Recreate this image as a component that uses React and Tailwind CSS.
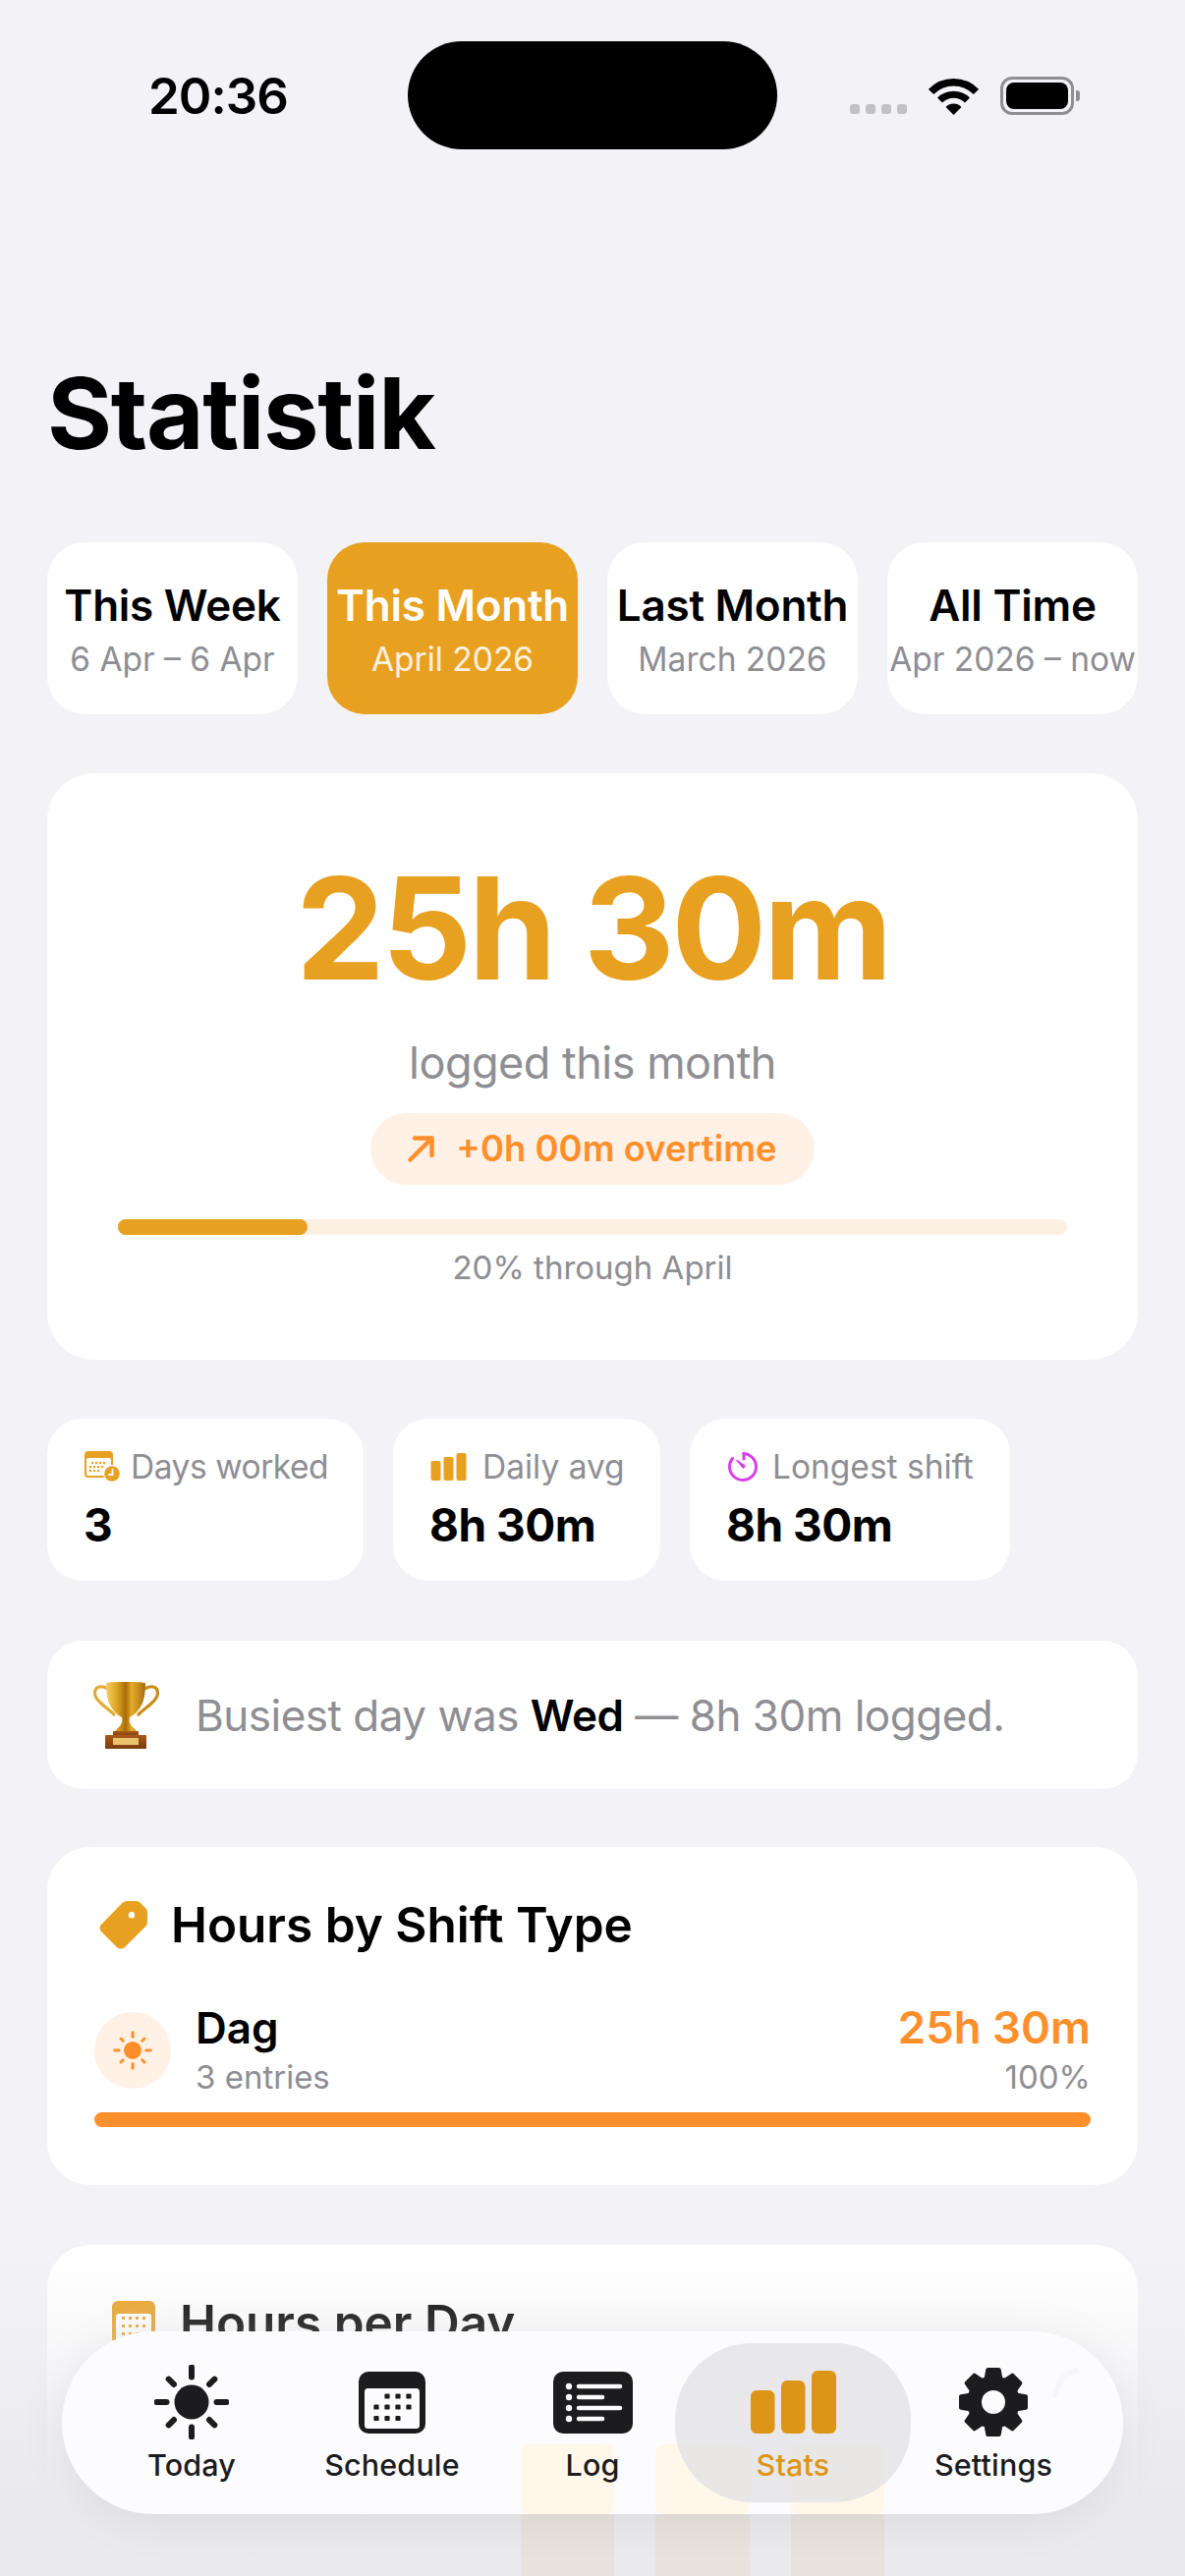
const AMBER = "#E8A020";

function Gear() {
  const pts = [];
  const cx = 36, cy = 36, R = 33.5, r = 25;
  for (let i = 0; i < 8; i++) {
    const a = (i * Math.PI) / 4 - Math.PI / 2;
    [[r, -0.3], [R, -0.17], [R, 0.17], [r, 0.3]].forEach(([rad, d]) => {
      pts.push(`${(cx + rad * Math.cos(a + d)).toFixed(2)},${(cy + rad * Math.sin(a + d)).toFixed(2)}`);
    });
  }
  return (
    <svg width="72" height="72" viewBox="0 0 72 72">
      <path
        fillRule="evenodd"
        fill="#1c1c1e"
        stroke="#1c1c1e"
        strokeWidth="4"
        strokeLinejoin="round"
        d={`M${pts.join(" L")} Z`}
      />
      <circle cx="36" cy="36" r="12" fill="#fcfcff" />
    </svg>
  );
}

function Sun({ size = 76, color = "#1c1c1e", disc = 17.5, inner = 25.5, outer = 35.5, sw = 6 }) {
  const c = 38;
  const rays = [];
  for (let i = 0; i < 8; i++) {
    const a = (i * Math.PI) / 4;
    const k = i % 2 ? 0.93 : 1;
    rays.push(
      <line
        key={i}
        x1={c + inner * Math.cos(a)}
        y1={c + inner * Math.sin(a)}
        x2={c + outer * k * Math.cos(a)}
        y2={c + outer * k * Math.sin(a)}
        stroke={color}
        strokeWidth={sw}
        strokeLinecap="round"
      />
    );
  }
  return (
    <svg width={size} height={size} viewBox="0 0 76 76">
      <circle cx={c} cy={c} r={disc} fill={color} />
      {rays}
    </svg>
  );
}

function CalendarIcon() {
  const dots = [
    [29, 25], [40, 25], [51, 25],
    [18, 36], [29, 36], [40, 36], [51, 36],
    [18, 47.5], [29, 47.5], [40, 47.5],
  ];
  return (
    <svg width="68" height="63" viewBox="0 0 68 63">
      <rect width="68" height="63" rx="10" fill="#1c1c1e" />
      <rect x="6" y="17" width="56" height="41" rx="3.5" fill="#fcfcff" />
      {dots.map(([x, y], i) => (
        <rect key={i} x={x - 2.6} y={y - 2.6} width="5.2" height="5.2" rx="1.2" fill="#1c1c1e" />
      ))}
    </svg>
  );
}

function LogIcon() {
  const rows = [[15, 68], [26, 50], [37, 68], [48, 50]];
  return (
    <svg width="81" height="63" viewBox="0 0 81 63">
      <rect width="81" height="63" rx="10" fill="#1c1c1e" />
      {rows.map(([y, end]) => (
        <g key={y}>
          <circle cx="16" cy={y} r="3.2" fill="#fcfcff" />
          <line x1="26" x2={end} y1={y} y2={y} stroke="#fcfcff" strokeWidth="4.5" strokeLinecap="round" />
        </g>
      ))}
    </svg>
  );
}

function StatsIcon() {
  return (
    <svg width="87" height="64" viewBox="0 0 87 64">
      <rect x="0" y="20" width="24.5" height="44" rx="6" fill="#DD9518" />
      <rect x="31" y="10" width="24.5" height="54" rx="6" fill="#DD9518" />
      <rect x="62" y="0" width="25" height="64" rx="6" fill="#DD9518" />
    </svg>
  );
}

function NavItem({ label, active, children }) {
  return (
    <div className="relative flex flex-col items-center">
      {active && <div className="absolute left-[-18px] right-[-18px] top-[-22px] h-[162px] rounded-[78px] bg-[#e2e2e5]/80" />}
      <div className="relative flex h-[76px] items-center justify-center">{children}</div>
      <div className={`relative mt-[7px] text-[30.5px] leading-[38px] font-medium tracking-[0.15px] ${active ? "text-[#DD9518]" : "text-[#1c1c1e]"}`}>
        {label}
      </div>
    </div>
  );
}

function Chip({ title, sub, active }) {
  return (
    <div className={`flex h-[175px] w-[255px] flex-col items-center justify-center rounded-[38px] whitespace-nowrap ${active ? "bg-[#E8A020] text-white" : "bg-white text-black"}`}>
      <div className="text-[44px] leading-[54px] font-semibold tracking-[-0.25px]">{title}</div>
      <div className={`mt-[8px] text-[33.5px] leading-[40px] ${active ? "text-white/85" : "text-[#8e8e93]"}`}>{sub}</div>
    </div>
  );
}

function StatCard({ icon, label, value, width, gap, tracking }) {
  return (
    <div className={`h-[165px] rounded-[36px] bg-white pl-[38px] pt-[29px] whitespace-nowrap ${width}`}>
      <div className={`flex h-[40px] items-center text-[33.5px] leading-[40px] text-[#8e8e93] ${gap}`}>
        {icon}
        <span className={tracking}>{label}</span>
      </div>
      <div className="mt-[16px] -ml-[1px] text-[46px] leading-none font-bold tracking-[-0.5px] text-black">{value}</div>
    </div>
  );
}

function Trophy() {
  return (
    <svg width="67" height="68" viewBox="0 0 67 68">
      <defs>
        <linearGradient id="tg" x1="0" x2="1" y1="0" y2="0">
          <stop offset="0" stopColor="#f6cf62" />
          <stop offset="0.3" stopColor="#d9a021" />
          <stop offset="0.5" stopColor="#a86c08" />
          <stop offset="0.65" stopColor="#e6ad2c" />
          <stop offset="1" stopColor="#a66d0c" />
        </linearGradient>
        <linearGradient id="tb" x1="0" x2="0" y1="0" y2="1">
          <stop offset="0" stopColor="#a85a18" />
          <stop offset="1" stopColor="#7c3a0c" />
        </linearGradient>
      </defs>
      <path d="M15 7 C6 2 0 6 2 14 C4 21 14 26 21 33" fill="none" stroke="#e2ab33" strokeWidth="3.2" strokeLinecap="round" />
      <path d="M52 7 C61 2 67 6 65 14 C63 21 53 26 46 33" fill="none" stroke="#c98f1a" strokeWidth="3.2" strokeLinecap="round" />
      <path d="M13 1 C20 -0.5 46 -0.5 53 1 C53 17 50 29 37 36 C36 40 37 43 40 46 C43 48 44 50 44 51 L22 51 C22 50 23 48 26 46 C29 43 30 40 29 36 C16 29 13 17 13 1 Z" fill="url(#tg)" />
      <rect x="20" y="50" width="26" height="6" fill="url(#tb)" />
      <rect x="12" y="54" width="42" height="14" rx="1" fill="url(#tb)" />
      <rect x="20" y="57" width="26" height="7" fill="#e9c36c" />
    </svg>
  );
}

export default function App() {
  return (
    <div className="relative h-[2622px] w-[1206px] overflow-hidden bg-[#f2f2f7] font-['Inter',sans-serif] text-black">
      {/* status bar */}
      <div className="flex h-[152px] items-start pt-[42px]">
        <div className="flex h-[110px] w-[415px] items-center pl-[151px] text-[51px] leading-none font-semibold tracking-[-1px]">20:36</div>
        <div className="h-[110px] w-[376px] rounded-[55px] bg-black" />
        <div className="flex h-[110px] items-start pl-[74px]">
          <div className="mt-[64px] flex gap-[6px]">
            <div className="h-[10px] w-[10px] rounded-[3px] bg-[#c2c2c6]" />
            <div className="h-[10px] w-[10px] rounded-[3px] bg-[#c2c2c6]" />
            <div className="h-[10px] w-[10px] rounded-[3px] bg-[#c2c2c6]" />
            <div className="h-[10px] w-[10px] rounded-[3px] bg-[#c2c2c6]" />
          </div>
          <svg className="mt-[37px] ml-[22px]" width="51" height="38" viewBox="0 0 51 38">
            <path d="M2.5 14.5 A32 32 0 0 1 48.5 14.5" fill="none" stroke="#000" strokeWidth="7.5" />
            <path d="M11.5 23 A20 20 0 0 1 39.5 23" fill="none" stroke="#000" strokeWidth="7" />
            <path d="M17.5 30 A11 11 0 0 1 33.5 30 L25.5 38 Z" fill="#000" />
          </svg>
          <div className="mt-[36px] ml-[22px] flex items-center">
            <div className="flex h-[39px] w-[75px] items-center justify-center rounded-[12px] border-[3.5px] border-[#8e8e93]">
              <div className="h-[27px] w-[63px] rounded-[8px] bg-black" />
            </div>
            <div className="ml-[2px] h-[11px] w-[4px] rounded-r-[3px] bg-[#8e8e93]" />
          </div>
        </div>
      </div>

      <div className="px-[48px]">
        <h1 className="mt-[218px] text-[101px] leading-none font-bold tracking-[-1.3px]">Statistik</h1>

        <div className="mt-[81px] flex gap-[30px]">
          <Chip title="This Week" sub="6 Apr – 6 Apr" />
          <Chip title="This Month" sub="April 2026" active />
          <Chip title="Last Month" sub="March 2026" />
          <Chip title="All Time" sub="Apr 2026 – now" />
        </div>

        {/* hero */}
        <div className="mt-[60px] flex h-[597px] flex-col items-center rounded-[48px] bg-white px-[72px] pt-[86px]">
          <div className="text-[144px] leading-none font-bold tracking-[-3.4px] text-[#E8A020]">25h 30m</div>
          <div className="mt-[37px] text-[45px] leading-[56px] tracking-[-0.5px] text-[#8e8e93]">logged this month</div>
          <div className="mt-[23px] flex h-[73px] items-center gap-[22px] rounded-[37px] bg-[#fff1e6] px-[38px]">
            <svg width="27" height="27" viewBox="0 0 27 27" fill="none" stroke="#FF8F2B" strokeWidth="4.5" strokeLinecap="round" strokeLinejoin="round">
              <path d="M2.5 24.5 L24.5 2.5 M7 2.5 H24.5 V20" />
            </svg>
            <span className="text-[36.5px] leading-none font-semibold text-[#FF8F2B]">+0h 00m overtime</span>
          </div>
          <div className="mt-[35px] h-[16px] w-full rounded-full bg-[#fcf1e0]">
            <div className="h-full w-[20%] rounded-full bg-[#E8A020]" />
          </div>
          <div className="mt-[13px] text-[33px] leading-[40px] text-[#8e8e93]">20% through April</div>
        </div>

        {/* stats */}
        <div className="mt-[60px] flex gap-[30px]">
          <StatCard
            width="w-[322px]"
            gap="gap-[11px]"
            tracking="tracking-[-0.45px]"
            label="Days worked"
            value="3"
            icon={
              <svg width="36" height="32" viewBox="0 0 36 32">
                <rect y="0" width="29" height="27" rx="4" fill={AMBER} />
                <rect x="2" y="7" width="25" height="18" rx="2" fill="#fff" />
                {[[7, 11], [11, 11], [15, 11], [19, 11], [5, 15], [9, 15], [13, 15], [17, 15], [5, 19], [9, 19], [13, 19]].map(([x, y], i) => (
                  <rect key={i} x={x} y={y} width="2.2" height="2.2" fill={AMBER} />
                ))}
                <circle cx="28" cy="23" r="9" fill="#fff" />
                <circle cx="28" cy="23" r="7.8" fill={AMBER} />
                <path d="M28.5 18 V24 H24" fill="none" stroke="#fff" strokeWidth="1.8" />
              </svg>
            }
          />
          <StatCard
            width="w-[272px]"
            gap="gap-[16px]"
            label="Daily avg"
            value="8h 30m"
            icon={
              <svg width="37" height="28" viewBox="0 0 36 28">
                <rect x="0" y="8" width="10" height="20" rx="2" fill={AMBER} />
                <rect x="13" y="4" width="10" height="24" rx="2" fill={AMBER} />
                <rect x="26" y="0" width="10" height="28" rx="2" fill={AMBER} />
              </svg>
            }
          />
          <StatCard
            width="w-[326px]"
            gap="gap-[14px]"
            label="Longest shift"
            value="8h 30m"
            icon={
              <svg width="32" height="32" viewBox="0 0 32 32" fill="none" stroke="#D63FE5" strokeWidth="3" strokeLinecap="round">
                <path d="M17 2.5 A13.5 13.5 0 1 1 5.5 7.5" />
                <path d="M17 2.5 V8" />
                <path d="M10 9.5 L16.5 17 L18 15 Z" fill="#D63FE5" strokeWidth="1.5" strokeLinejoin="round" />
              </svg>
            }
          />
        </div>

        {/* insight */}
        <div className="mt-[61px] flex h-[151px] items-center gap-[37px] rounded-[36px] bg-white pl-[47px]">
          <Trophy />
          <div className="text-[44px] leading-[56px] tracking-[-0.5px] whitespace-nowrap text-[#8e8e93]">
            Busiest day was <span className="font-semibold text-black">Wed</span> — 8h 30m logged.
          </div>
        </div>

        {/* shift type */}
        <div className="mt-[59px] h-[344px] rounded-[44px] bg-white px-[48px] pt-[49px]">
          <div className="flex h-[60px] items-center gap-[24px] pl-[5px]">
            <svg width="49" height="49" viewBox="0 0 49 49">
              <path
                fillRule="evenodd"
                fill={AMBER}
                d="M24 1.5 Q25.5 0 28 0 L38 0 Q40 0 41.5 1.5 L47.5 7.5 Q49 9 49 11 L49 21 Q49 24 47 26 L26 47 Q22 50 18 47 L2 31 Q-1 27 2 24 Z M33 11 A3.2 3.2 0 1 0 33 17.4 A3.2 3.2 0 1 0 33 11 Z"
              />
            </svg>
            <div className="text-[49.5px] leading-[60px] font-semibold">Hours by Shift Type</div>
          </div>
          <div className="mt-[51px] flex items-center">
            <div className="flex h-[78px] w-[78px] items-center justify-center rounded-full bg-[#fff1e6]">
              <Sun size={42} color="#FF8F2B" disc={16.3} inner={25} outer={33} sw={5.4} />
            </div>
            <div className="ml-[25px] flex-1">
              <div className="text-[44px] leading-[48px] font-semibold">Dag</div>
              <div className="mt-[6px] text-[33px] leading-[40px] text-[#8e8e93]">3 entries</div>
            </div>
            <div className="text-right">
              <div className="text-[45.5px] leading-[48px] font-semibold text-[#FF8F2B]">25h 30m</div>
              <div className="mt-[6px] text-[33px] leading-[40px] text-[#8e8e93]">100%</div>
            </div>
          </div>
          <div className="mt-[16px] h-[15px] rounded-full bg-[#FF8F2B]" />
        </div>

        {/* hours per day */}
        <div className="mt-[61px] h-[500px] rounded-[44px] bg-white pt-[49px] pr-[48px] pl-[66px]">
          <div className="flex h-[60px] items-center gap-[25px]">
            <svg width="44" height="44" viewBox="0 0 44 44">
              <rect width="44" height="44" rx="6" fill={AMBER} />
              <rect x="4" y="13" width="36" height="28" rx="3" fill="#fff" />
              {[16, 24, 32].map((y) =>
                [10, 17, 24, 31].map((x) => <rect key={`${x}-${y}`} x={x} y={y} width="3" height="3" fill={AMBER} />)
              )}
            </svg>
            <div className="text-[49.5px] leading-[60px] font-semibold">Hours per Day</div>
          </div>
          <div className="mt-[93px] flex items-start gap-[42px] pl-[416px]">
            <div className="h-[300px] w-[95px] rounded-t-[8px] bg-[#E8A020]" />
            <div className="h-[300px] w-[96px] rounded-t-[8px] bg-[#E8A020]" />
            <div className="h-[300px] w-[95px] rounded-t-[8px] bg-[#E8A020]" />
          </div>
        </div>
      </div>

      {/* fade at bottom */}
      <div className="absolute inset-x-0 top-[2290px] bottom-0 bg-linear-to-b from-[#e8e8ed]/0 via-[#e8e8ed]/25 via-25% to-[#e8e8ed]/92 to-80%" />

      {/* tab bar */}
      <div className="absolute top-[2373px] left-[63px] h-[186px] w-[1080px] overflow-hidden rounded-[93px] bg-[#fcfcff] pt-[34px] shadow-[0_6px_50px_rgba(0,0,0,0.07)]">
        <div className="absolute top-[115px] left-[467px] h-[71px] w-[95px] rounded-[8px] bg-[#fff8ea]" />
        <div className="absolute top-[115px] left-[604px] h-[71px] w-[96px] rounded-[8px] bg-[#fff8ea]" />
        <div className="absolute top-[115px] left-[742px] h-[71px] w-[95px] rounded-[8px] bg-[#fff8ea]" />
        <svg className="absolute top-[36px] left-[1005px]" width="36" height="36" viewBox="0 0 36 36" fill="none" stroke="#f7f7f9" strokeWidth="6">
          <path d="M6 32 C6 18 14 6 30 4" />
        </svg>
        <div className="relative grid grid-cols-5 px-[30px]">
          <NavItem label="Today"><Sun /></NavItem>
          <NavItem label="Schedule"><CalendarIcon /></NavItem>
          <NavItem label="Log"><LogIcon /></NavItem>
          <NavItem label="Stats" active><StatsIcon /></NavItem>
          <NavItem label="Settings"><Gear /></NavItem>
        </div>
      </div>
    </div>
  );
}
